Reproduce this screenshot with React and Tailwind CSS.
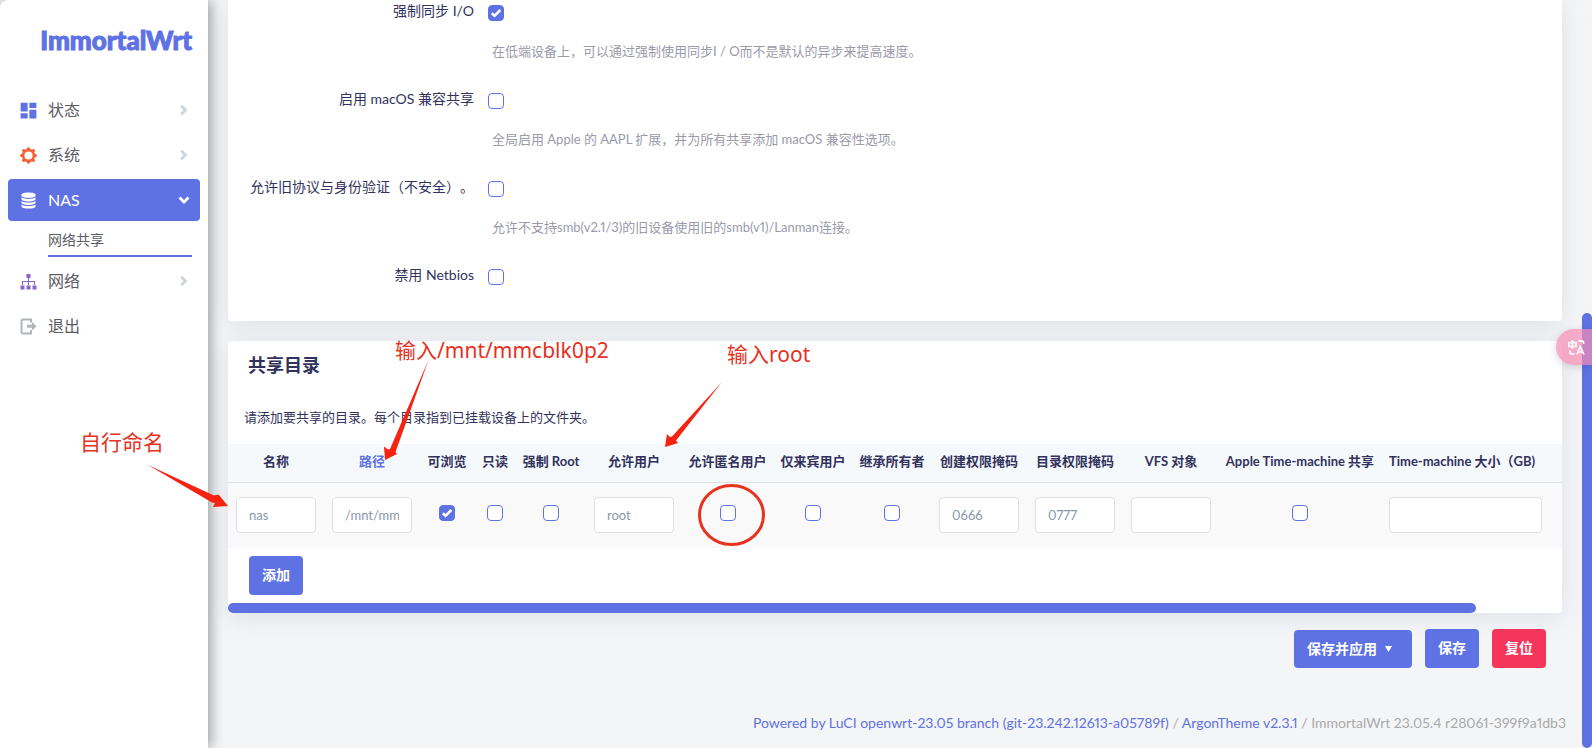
import React from "react";
import { MdDashboard } from "react-icons/md";

function Checkbox({ id, label, checked = false }) {
  return (
    <span className="inline-grid size-4 align-middle">
      <input
        id={id}
        type="checkbox"
        aria-label={label}
        defaultChecked={checked}
        className="peer col-start-1 row-start-1 m-0 size-4 appearance-none rounded border border-[#5e72e4] bg-white checked:bg-[#5e72e4]"
      />
      <svg
        viewBox="0 0 16 16"
        className="pointer-events-none invisible col-start-1 row-start-1 size-4 peer-checked:visible"
        fill="none"
        stroke="#fff"
        strokeWidth="2.6"
      >
        <path d="M3.8 8.2 6.6 10.8 12.3 5" />
      </svg>
    </span>
  );
}

function GearIcon() {
  return (
    <svg viewBox="0 0 17 17" className="size-[17px]" fill="#f56036">
      <circle cx="8.5" cy="8.5" r="5.4" fill="none" stroke="#f56036" strokeWidth="2.6" />
      <circle cx="8.5" cy="1.9" r="1.7" />
      <circle cx="8.5" cy="15.1" r="1.7" />
      <circle cx="1.9" cy="8.5" r="1.7" />
      <circle cx="15.1" cy="8.5" r="1.7" />
      <circle cx="3.8" cy="3.8" r="1.8" />
      <circle cx="13.2" cy="3.8" r="1.8" />
      <circle cx="3.8" cy="13.2" r="1.8" />
      <circle cx="13.2" cy="13.2" r="1.8" />
    </svg>
  );
}

function DatabaseIcon() {
  return (
    <svg viewBox="0 0 17 17" className="size-[17px]" fill="#fff">
      <path d="M1.5 2.7C1.5 1.3 4.6.4 8.500.4s7 .9 7 2.300v1.100c0 1.200-3.100 2.100-7 2.100s-7-.9-7-2.100z" />
      <path d="M1.500 5.300c1.300 1.100 3.900 1.600 7 1.600s5.700-.5 7-1.600v2c0 1.200-3.100 2.200-7 2.200s-7-1-7-2.200z" />
      <path d="M1.500 8.900c1.300 1.100 3.900 1.600 7 1.600s5.700-.5 7-1.600v1.900c0 1.200-3.100 2.200-7 2.200s-7-1-7-2.200z" />
      <path d="M1.500 12.400c1.300 1.100 3.900 1.600 7 1.600s5.700-.5 7-1.600v2c0 1.200-3.100 2.200-7 2.200s-7-1-7-2.200z" />
    </svg>
  );
}

function SitemapIcon() {
  return (
    <svg viewBox="0 0 17 17" className="size-[17px]" fill="#8965c8">
      <rect x="6.500" y="1" width="4" height="4" />
      <path d="M8 5h1v3h6v4h-1V9H9v3H8V9H3v3H2V8h6z" />
      <rect x="0.500" y="12.500" width="4" height="4" />
      <rect x="6.500" y="12.500" width="4" height="4" />
      <rect x="12.500" y="12.500" width="4" height="4" />
    </svg>
  );
}

function ExitIcon() {
  return (
    <svg viewBox="0 0 17 17" className="size-[17px]" fill="none" stroke="#adb5bd">
      <path d="M11 4.500V1.500H3A1.500 1.500 0 0 0 1.500 3v11A1.500 1.500 0 0 0 3 15.500h8V12" strokeWidth="2" />
      <path d="M7 6.700h5V4l4.500 4.300L12 12.500V9.800H7z" fill="#adb5bd" stroke="none" />
    </svg>
  );
}

function Chevron({ open }) {
  return open ? (
    <svg viewBox="0 0 12 12" className="size-3" fill="none" stroke="#fff" strokeWidth="2.800">
      <path d="M1.500 3.600 6 8 10.500 3.600" />
    </svg>
  ) : (
    <svg viewBox="0 0 12 12" className="size-3" fill="none" stroke="#ced4da" strokeWidth="2.800">
      <path d="M3.200 1.800 7.400 6 3.200 10.200" />
    </svg>
  );
}

function NavItem({ icon, text, active, chevron = true }) {
  return (
    <a
      href="#"
      className={
        active
          ? "flex h-[42px] items-center rounded bg-[#5e72e4] pl-3 pr-[10px] text-base text-white"
          : "flex h-[42px] items-center rounded pl-3 pr-[10px] text-base text-[#5c5c66]"
      }
    >
      <span className="flex w-7 shrink-0 items-center">{icon}</span>
      <span className="flex-1">{text}</span>
      {chevron && <Chevron open={active} />}
    </a>
  );
}

const options = [
  { id: "sync", label: "强制同步 I/O", checked: true, help: "在低端设备上，可以通过强制使用同步I / O而不是默认的异步来提高速度。" },
  { id: "macos", label: "启用 macOS 兼容共享", help: "全局启用 Apple 的 AAPL 扩展，并为所有共享添加 macOS 兼容性选项。" },
  { id: "legacy", label: "允许旧协议与身份验证（不安全）。", help: "允许不支持smb(v2.1/3)的旧设备使用旧的smb(v1)/Lanman连接。" },
  { id: "netbios", label: "禁用 Netbios" },
];

const columns = [
  { name: "名称", col: "w-24", input: "nas" },
  { name: "路径", col: "w-24", input: "/mnt/mmcblk0p2", link: true },
  { name: "可浏览", col: "w-[54px]", checked: true },
  { name: "只读", col: "w-[42px]" },
  { name: "强制 Root", col: "w-[70px]" },
  { name: "允许用户", col: "w-24", input: "root" },
  { name: "允许匿名用户", col: "w-[91px]" },
  { name: "仅来宾用户", col: "w-20" },
  { name: "继承所有者", col: "w-[78px]" },
  { name: "创建权限掩码", col: "w-24", input: "0666" },
  { name: "目录权限掩码", col: "w-24", input: "0777" },
  { name: "VFS 对象", col: "w-24", input: "" },
  { name: "Apple Time-machine 共享", col: "w-[162px]" },
  { name: "Time-machine 大小（GB)", col: "w-[169px]", input: "", left: true },
];

function Sidebar() {
  return (
    <aside className="z-10 w-52 shrink-0 rounded-tl-lg bg-white px-2 shadow-[2px_0_14px_rgba(0,0,0,0.4)]">
      <div className="flex h-20 items-center justify-end pr-2 font-[Lato] text-[26px] font-black text-[#5e72e4] [-webkit-text-stroke:1px_#5e72e4]">
        <a href="#">ImmortalWrt</a>
      </div>
      <nav className="mt-[9px] flex flex-col gap-[3px]">
        <NavItem icon={<MdDashboard className="size-[21px] -ml-0.5 text-[#5e72e4]" />} text="状态" />
        <NavItem icon={<GearIcon />} text="系统" />
        <div>
          <NavItem icon={<DatabaseIcon />} text="NAS" active />
          <a href="#" className="ml-10 mr-2 flex h-9 items-center border-b-2 border-[#5e72e4] pt-1 text-sm text-[#5c5c66]">
            网络共享
          </a>
        </div>
        <NavItem icon={<SitemapIcon />} text="网络" />
        <NavItem icon={<ExitIcon />} text="退出" chevron={false} />
      </nav>
    </aside>
  );
}

function ShareTable() {
  return (
    <table className="w-full table-fixed border-collapse text-[13px]">
      <colgroup>
        {columns.map((c) => (
          <col key={c.name} className={c.col} />
        ))}
        <col />
      </colgroup>
      <thead>
        <tr className="h-[38px] border-b border-[#dee2e6] bg-[#f6f9fc]">
          {columns.map((c) => (
            <th
              key={c.name}
              className={
                c.left
                  ? "whitespace-nowrap pb-0.5 pl-2 text-left font-bold"
                  : c.link
                    ? "whitespace-nowrap pb-0.5 font-bold text-[#5e72e4]"
                    : "whitespace-nowrap pb-0.5 font-bold"
              }
            >
              {c.name}
            </th>
          ))}
          <th />
        </tr>
      </thead>
      <tbody>
        <tr className="h-[66px] bg-[#f9f9f9]">
          {columns.map((c) => (
            <td key={c.name} className={c.input === undefined ? "pb-1.5 text-center" : "px-2"}>
              {c.input === undefined ? (
                <Checkbox label={c.name} checked={c.checked} />
              ) : (
                <input
                  type="text"
                  aria-label={c.name}
                  defaultValue={c.input}
                  className="block h-9 w-full rounded border border-[#dee2e6] bg-white px-3 text-[#8898aa]"
                />
              )}
            </td>
          ))}
          <td />
        </tr>
      </tbody>
    </table>
  );
}

function Annotations() {
  return (
    <div className="pointer-events-none absolute left-0 top-0 z-20 whitespace-nowrap font-['Noto_Sans','Noto_Sans_CJK_SC',sans-serif] text-[21px] leading-8 text-[#e6321f]">
      <svg width="840" height="560" viewBox="0 0 840 560" fill="#f7220f">
        <path d="M148 465 214 495.500 218.500 494.500 228 506 213 507 215 503 212 502.500Z" />
        <path d="M428.500 360 395.500 452 397 454 385 460 384 446.500 388 449.500 390 449Z" />
        <path d="M722 382 676 440.500 678 443 665 447 667 434 670 437 672 436.500Z" />
        <ellipse cx="731.500" cy="515" rx="32" ry="29.500" fill="none" stroke="#e6321f" strokeWidth="3" />
      </svg>
      <span className="absolute left-[80px] top-[426px]">自行命名</span>
      <span className="absolute left-[395px] top-[334px]">输入/mnt/mmcblk0p2</span>
      <span className="absolute left-[727px] top-[338px]">输入root</span>
    </div>
  );
}

function TranslateButton() {
  return (
    <button
      type="button"
      aria-label="翻译"
      className="absolute right-0 top-[329px] z-20 flex h-9 w-9 items-center rounded-l-full bg-[#f58ab4]/70 pl-3 shadow-[0_2px_8px_rgba(0,0,0,0.15)]"
    >
      <svg viewBox="0 0 17 17" className="size-[17px]" fill="none" stroke="#fff" strokeWidth="1.700">
        <path d="M1 3.500h7v4H1zM4.500 1v9M10.500 1.800H14a1.500 1.500 0 0 1 1.500 1.500V5M2 11.500V13a2 2 0 0 0 2 2h2.500M9 15.500 12.300 7.500 16 15.500M10.300 13h4.500" />
      </svg>
    </button>
  );
}

export default function App() {
  return (
    <div className="relative flex min-h-screen overflow-hidden bg-[#f4f5f7] font-[Lato,'Noto_Sans_CJK_SC',sans-serif] text-[#32325d] proportional-nums [text-spacing-trim:space-all]">
      <Sidebar />
      <main className="min-w-0 flex-1 pl-5 pr-[30px]">
        <section className="flex h-[321px] flex-col rounded-b bg-white pt-px shadow-[0_4px_24px_rgba(136,152,170,0.2)]">
          {options.map((o) => (
            <div key={o.id} className="h-[88px] shrink-0 last:h-auto">
              <div className="flex h-6 items-center gap-[14px]">
                <label htmlFor={o.id} className="w-[246px] whitespace-nowrap pb-1 text-right text-sm">
                  {o.label}
                </label>
                <Checkbox id={o.id} label={o.label} checked={o.checked} />
              </div>
              {o.help && <p className="pl-66 pt-4 text-[13px] leading-5 text-[#9a9aab]">{o.help}</p>}
            </div>
          ))}
        </section>

        <section className="mt-5 rounded bg-white shadow-[0_4px_24px_rgba(136,152,170,0.2)]">
          <h3 className="pl-5 pt-3 text-lg font-bold leading-6">共享目录</h3>
          <p className="pb-[17px] pl-4 pt-[30px] text-[13px] leading-5">
            请添加要共享的目录。每个目录指到已挂载设备上的文件夹。
          </p>
          <ShareTable />
          <div className="pb-2 pl-[21px] pt-2">
            <button type="button" className="h-[39px] w-[54px] rounded bg-[#5e72e4] pb-0.5 text-sm font-bold text-white">
              添加
            </button>
          </div>
          <div className="h-[10px] pr-[86px]">
            <div className="h-full rounded-full bg-[#5e72e4]" />
          </div>
        </section>

        <div className="mt-4 flex items-end justify-end gap-[13px] pr-4 text-sm font-bold text-white">
          <button type="button" className="flex h-[38px] items-center gap-2 rounded bg-[#5e72e4] pl-[13px] pr-5">
            保存并应用
            <svg viewBox="0 0 7 6" className="h-[6px] w-[7px]" fill="#fff">
              <path d="M0 0h7L3.500 6z" />
            </svg>
          </button>
          <button type="button" className="h-[39px] w-[54px] rounded bg-[#5e72e4] pb-0.5">
            保存
          </button>
          <button type="button" className="h-[39px] w-[54px] rounded bg-[#f5365c] pb-0.5">
            复位
          </button>
        </div>

        <footer className="-mr-1 pt-[45px] text-right text-sm leading-5 text-[#aaaaaa]">
          <a href="#" className="text-[#5e72e4]">
            Powered by LuCI openwrt-23.05 branch (git-23.242.12613-a05789f)
          </a>{" "}
          /{" "}
          <a href="#" className="text-[#5e72e4]">
            ArgonTheme v2.3.1
          </a>{" "}
          / ImmortalWrt 23.05.4 r28061-399f9a1db3
        </footer>
      </main>
      <div className="absolute bottom-0 right-0 top-[313px] w-[10px] rounded-full bg-[#5e72e4]" />
      <TranslateButton />
      <Annotations />
    </div>
  );
}
